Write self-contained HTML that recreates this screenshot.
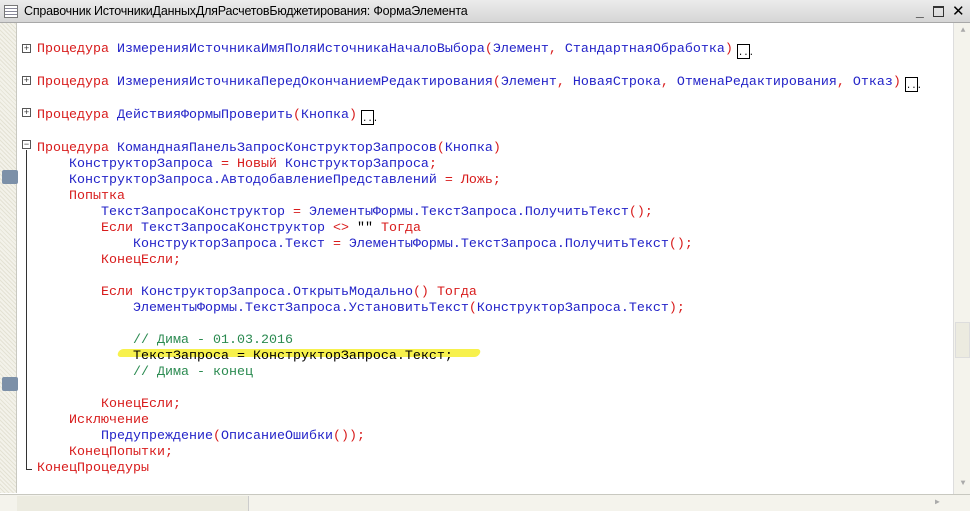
<!DOCTYPE html>
<html><head><meta charset="utf-8"><style>
*{margin:0;padding:0;box-sizing:border-box}
body{width:970px;height:511px;overflow:hidden;background:#fff;position:relative;font-family:"Liberation Mono",monospace}
#title{position:absolute;left:0;top:0;width:970px;height:23px;background:linear-gradient(#ececec,#d6d6d6);border-bottom:1px solid #a8a8a8;font-family:"Liberation Sans",sans-serif;font-size:12.5px;color:#000;line-height:23px;padding-left:24px;letter-spacing:-0.2px}
#ico{position:absolute;left:4px;top:5px;width:14px;height:13px;border:1px solid #777;background:repeating-linear-gradient(#fff 0 2px,#889 2px 3px)}
#gut{position:absolute;left:0;top:23px;width:17px;height:470px;background:repeating-linear-gradient(45deg,#e4e2d4 0 1px,#f3f2ea 1px 3px);border-right:1px solid #c8c8c0}
.mk{position:absolute;left:2px;width:16px;height:14px;background:#7c90a8;border-radius:2px}
#code{position:absolute;left:37px;top:42px;font-size:13.33px;line-height:16px;white-space:pre;color:#2323c8}
.r{color:#d81c1c}.g{color:#2a8a50}.k{color:#000}
.pb{position:absolute;left:22px;width:9px;height:9px;border:1px solid #555;font-size:9px;line-height:7px;text-align:center;color:#333;font-family:"Liberation Sans",sans-serif;background:#fff}
.dots{display:inline-block;width:13px;height:15px;border:1px solid #000;vertical-align:-3px;margin-left:4px;font-size:9px;line-height:16px;color:#000;text-align:center}
#vs{position:absolute;left:953px;top:23px;width:17px;height:471px;background:#f4f3ec;border-left:1px solid #ddd}
#hs{position:absolute;left:0;top:494px;width:970px;height:17px;background:#f4f3ec;border-top:1px solid #c8c8c0}
</style></head><body>
<div id="title"><div id="ico"></div>Справочник ИсточникиДанныхДляРасчетовБюджетирования: ФормаЭлемента
<span style="position:absolute;left:916px;top:0;font-size:14px;font-weight:bold">_</span>
<span style="position:absolute;left:933px;top:6px;width:11px;height:11px;border:1px solid #333;border-top-width:2px"></span>
<span style="position:absolute;left:952px;top:0;font-size:15px">✕</span></div>
<div id="gut"><div class="mk" style="top:147px"></div><div class="mk" style="top:354px"></div></div>
<div class="pb" style="top:44px">+</div>
<div class="pb" style="top:76px">+</div>
<div class="pb" style="top:108px">+</div>
<div class="pb" style="top:140px">−</div>
<div style="position:absolute;left:26px;top:150px;width:1px;height:320px;background:#333"></div>
<div style="position:absolute;left:26px;top:469px;width:6px;height:1px;background:#333"></div>
<div style="position:absolute;left:118px;top:349px;width:362px;height:8px;background:#f6f03a;border-radius:4px;opacity:.9;transform:skewX(-20deg)"></div>
<div id="code"><span class="r">Процедура</span> ИзмеренияИсточникаИмяПоляИсточникаНачалоВыбора<span class="r">(</span>Элемент<span class="r">,</span> СтандартнаяОбработка<span class="r">)</span><span class="dots">...</span>

<span class="r">Процедура</span> ИзмеренияИсточникаПередОкончаниемРедактирования<span class="r">(</span>Элемент<span class="r">,</span> НоваяСтрока<span class="r">,</span> ОтменаРедактирования<span class="r">,</span> Отказ<span class="r">)</span><span class="dots">...</span>

<span class="r">Процедура</span> ДействияФормыПроверить<span class="r">(</span>Кнопка<span class="r">)</span><span class="dots">...</span>

<span class="r">Процедура</span> КоманднаяПанельЗапросКонструкторЗапросов<span class="r">(</span>Кнопка<span class="r">)</span>
    КонструкторЗапроса <span class="r">=</span> <span class="r">Новый</span> КонструкторЗапроса<span class="r">;</span>
    КонструкторЗапроса.АвтодобавлениеПредставлений <span class="r">=</span> <span class="r">Ложь;</span>
    <span class="r">Попытка</span>
        ТекстЗапросаКонструктор <span class="r">=</span> ЭлементыФормы.ТекстЗапроса.ПолучитьТекст<span class="r">();</span>
        <span class="r">Если</span> ТекстЗапросаКонструктор <span class="r">&lt;&gt;</span> <span class="k">""</span> <span class="r">Тогда</span>
            КонструкторЗапроса.Текст <span class="r">=</span> ЭлементыФормы.ТекстЗапроса.ПолучитьТекст<span class="r">();</span>
        <span class="r">КонецЕсли;</span>

        <span class="r">Если</span> КонструкторЗапроса.ОткрытьМодально<span class="r">()</span> <span class="r">Тогда</span>
            ЭлементыФормы.ТекстЗапроса.УстановитьТекст<span class="r">(</span>КонструкторЗапроса.Текст<span class="r">);</span>

            <span class="g">// Дима - 01.03.2016</span>
            <span class="k">ТекстЗапроса = КонструкторЗапроса.Текст;</span>
            <span class="g">// Дима - конец</span>

        <span class="r">КонецЕсли;</span>
    <span class="r">Исключение</span>
        Предупреждение<span class="r">(</span>ОписаниеОшибки<span class="r">());</span>
    <span class="r">КонецПопытки;</span>
<span class="r">КонецПроцедуры</span></div>
<div id="vs"><div style="position:absolute;left:2px;top:0;width:14px;height:16px;color:#aaa;font-size:8px;text-align:center;line-height:16px">▲</div>
<div style="position:absolute;left:1px;top:299px;width:15px;height:36px;background:#ecebe0;border:1px solid #ddd"></div>
<div style="position:absolute;left:2px;bottom:2px;width:14px;height:16px;color:#aaa;font-size:8px;text-align:center;line-height:16px">▼</div></div>
<div id="hs"><div style="position:absolute;left:17px;top:1px;width:232px;height:15px;background:#ecebe0;border-right:1px solid #ccc"></div>
<div style="position:absolute;left:935px;top:0;color:#aaa;font-size:8px;line-height:16px">▶</div></div>
</body></html>
